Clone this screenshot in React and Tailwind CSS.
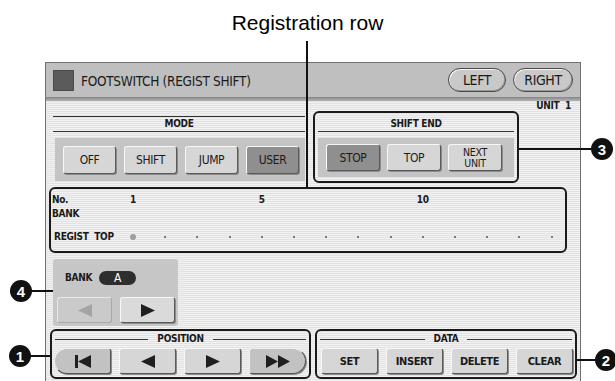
import React from "react";

function Tri({ dir = "r", color = "#1f1f1f", w = 14, h = 13 }) {
  const pts = dir === "r" ? `0,0 ${w},${h / 2} 0,${h}` : `${w},0 0,${h / 2} ${w},${h}`;
  return (
    <svg width={w} height={h} viewBox={`0 0 ${w} ${h}`}>
      <polygon points={pts} fill={color} />
    </svg>
  );
}

function Btn({ children, sel, className = "" }) {
  return (
    <div
      className={`flex items-center justify-center text-center rounded-[3px] border border-[#f7f7f7] border-r-[#5a5a5a] border-b-[#5a5a5a] shadow-[1px_1px_0_#8c8c8c] ${
        sel ? "bg-[#8f8f8f]" : "bg-[#d6d6d6]"
      } ${className}`}
    >
      {children}
    </div>
  );
}

function Pill({ children, className = "" }) {
  return (
    <div
      className={`h-[24px] flex items-center justify-center rounded-full border border-[#4a4a4a] bg-[#c9c9c9] shadow-[inset_1px_1px_0_#f4f4f4,inset_-1px_-1px_0_#9a9a9a] text-[14px] leading-[14px] tracking-[-0.4px] ${className}`}
    >
      {children}
    </div>
  );
}

function Num({ n, className }) {
  return (
    <div
      className={`absolute w-[22px] h-[22px] rounded-full bg-[#111111] text-white flex items-center justify-center text-[15px] leading-[15px] font-bold font-['Liberation_Sans',Arial,sans-serif] ${className}`}
    >
      {n}
    </div>
  );
}

function LabelRule({ label }) {
  return (
    <div className="h-[16px] flex items-center px-[3px]">
      <div className="flex-1 h-px bg-[#333333]" />
      <div className="px-[9px] text-[10px] leading-[10px] font-bold tracking-[-0.3px]">{label}</div>
      <div className="flex-1 h-px bg-[#333333]" />
    </div>
  );
}

const COLS = "grid grid-cols-[66px_repeat(14,32.2px)]";
const BTXT = "text-[12px] leading-[12px] tracking-[-0.4px]";

export default function App() {
  const dots = Array.from({ length: 14 }, (_, i) => i);
  return (
    <div className="relative w-[615px] h-[381px] overflow-hidden bg-white text-[#1a1a1a] font-['DejaVu_Sans_Condensed','Liberation_Sans',sans-serif]">
      <div className="h-[62px] pt-[10px] text-center text-[21px] leading-[25px] text-black font-['Liberation_Sans',Arial,sans-serif]">
        Registration row
      </div>

      <div className="ml-[45px] w-[536px] border border-b-0 border-[#707070]">
        {/* header */}
        <div className="h-[34px] bg-[#bfbfbf] flex items-center px-[7px]">
          <div className="w-[21px] h-[21px] bg-[#5b5b5b] border border-[#4a4a4a]" />
          <div className="ml-[7px] mt-[2px] text-[13.5px] leading-[16px] tracking-[-0.3px]">FOOTSWITCH (REGIST SHIFT)</div>
          <div className="ml-auto flex gap-[7px] -mt-[1px]">
            <Pill className="w-[58px]">LEFT</Pill>
            <Pill className="w-[60px]">RIGHT</Pill>
          </div>
        </div>
        <div className="h-[4px] bg-[image:linear-gradient(to_bottom,#858585,#b5b5b5)]" />

        {/* body */}
        <div className="h-[290px] bg-[image:repeating-linear-gradient(180deg,#e2e2e2_0px,#e2e2e2_1px,#f2f2f2_1px,#f2f2f2_2px)]">
          <div className="h-[10px] flex justify-end pr-[9px] text-[10px] leading-[10px] font-bold tracking-[-0.3px]">UNIT&nbsp;&nbsp;1</div>

          <div className="flex pl-[7px] gap-[8px]">
            {/* MODE */}
            <div className="w-[252px] mt-[5px]">
              <div className="h-px bg-[#333333]" />
              <div className="h-[14px] text-center text-[10px] leading-[14px] font-bold tracking-[-0.3px]">MODE</div>
              <div className="h-px bg-[#333333]" />
              <div className="mt-[6px] ml-[2px] h-[43px] bg-[#c4c4c4] flex items-center pl-[8px] gap-[8px]">
                <Btn className={`w-[53px] h-[28px] ${BTXT}`}>OFF</Btn>
                <Btn className={`w-[53px] h-[28px] ${BTXT}`}>SHIFT</Btn>
                <Btn className={`w-[53px] h-[28px] ${BTXT}`}>JUMP</Btn>
                <Btn sel className={`w-[53px] h-[28px] ${BTXT}`}>USER</Btn>
              </div>
            </div>

            {/* SHIFT END */}
            <div className="w-[206px] h-[72px] border-2 border-[#1a1a1a] rounded-[6px]">
              <div className="h-[18px] pt-[4px] text-center text-[10px] leading-[14px] font-bold tracking-[-0.3px]">SHIFT END</div>
              <div className="mx-[3px] h-px bg-[#333333]" />
              <div className="mt-[6px] mx-[3px] h-[39px] bg-[#c4c4c4] flex items-center pl-[8px] gap-[7px]">
                <Btn sel className={`w-[54px] h-[27px] ${BTXT}`}>STOP</Btn>
                <Btn className={`w-[54px] h-[27px] ${BTXT}`}>TOP</Btn>
                <Btn className="w-[54px] h-[27px] flex-col text-[10.5px] leading-[11px] tracking-[-0.3px]">
                  <span className="block h-[11px]">NEXT</span>
                  <span className="block h-[11px]">UNIT</span>
                </Btn>
              </div>
            </div>
          </div>

          {/* Registration row */}
          <div className="mt-[4px] ml-[3px] w-[518px] h-[66px] border-2 border-[#1a1a1a] rounded-[6px] text-[10px] font-bold tracking-[-0.3px]">
            <div className={`${COLS} mt-[4px] h-[13px] leading-[13px]`}>
              <div className="pl-[1px]">No.</div>
              {dots.map((i) => (
                <div key={i} className="text-center">
                  {i === 0 ? "1" : i === 4 ? "5" : i === 9 ? "10" : ""}
                </div>
              ))}
            </div>
            <div className="mt-[1px] h-[13px] leading-[13px] pl-[1px]">BANK</div>
            <div className={`${COLS} mt-[10px] h-[13px] leading-[13px]`}>
              <div className="pl-[3px]">REGIST&nbsp;&nbsp;TOP</div>
              {dots.map((i) => (
                <div key={i} className="flex items-center justify-center pt-[1px]">
                  {i === 0 ? (
                    <div className="w-[6px] h-[6px] rounded-full bg-[#9e9e9e]" />
                  ) : (
                    <div className="w-[2px] h-[2px] rounded-full bg-[#555555]" />
                  )}
                </div>
              ))}
            </div>
          </div>

          {/* Bank */}
          <div className="mt-[6px] ml-[7px] w-[125px] h-[67px] bg-[#c6c6c6] rounded-[3px] pt-[12px]">
            <div className="flex items-center pl-[12px] gap-[7px] h-[14px]">
              <div className="text-[10px] leading-[10px] font-bold tracking-[-0.3px]">BANK</div>
              <div className="w-[37px] h-[14px] rounded-full bg-[#2e2e2e] text-white flex items-center justify-center text-[12px] leading-[12px]">
                A
              </div>
            </div>
            <div className="mt-[12px] flex pl-[4px] gap-[8px]">
              <div className="w-[55px] h-[26px] flex items-center justify-center rounded-[3px] border border-[#e8e8e8] border-r-[#a8a8a8] border-b-[#a8a8a8] bg-[#cacaca]">
                <Tri dir="l" color="#a4a4a4" />
              </div>
              <Btn className="w-[55px] h-[26px] bg-[#dadada]">
                <Tri dir="r" />
              </Btn>
            </div>
          </div>

          {/* Position / Data */}
          <div className="mt-[3px] flex pl-[4px] gap-[4px]">
            <div className="w-[261px] h-[50px] border-2 border-[#1a1a1a] rounded-[6px]">
              <LabelRule label="POSITION" />
              <div className="mt-[1px] flex pl-[2px] gap-[8px]">
                <div className="w-[57px] h-[26px] flex items-center justify-center rounded-l-[13px] rounded-r-[3px] border border-[#efefef] border-r-[#555555] border-b-[#555555] bg-[#c2c2c2] shadow-[1px_1px_0_#8c8c8c]">
                  <div className="w-[3px] h-[13px] bg-[#1f1f1f]" />
                  <Tri dir="l" w={13} />
                </div>
                <Btn className="w-[57px] h-[26px] bg-[#c2c2c2]">
                  <Tri dir="l" />
                </Btn>
                <Btn className="w-[57px] h-[26px] bg-[#c2c2c2]">
                  <Tri dir="r" />
                </Btn>
                <div className="w-[57px] h-[26px] flex items-center justify-center rounded-r-[13px] rounded-l-[3px] border border-[#efefef] border-r-[#555555] border-b-[#555555] bg-[#c2c2c2] shadow-[1px_1px_0_#8c8c8c]">
                  <Tri dir="r" w={12} />
                  <Tri dir="r" w={12} />
                </div>
              </div>
            </div>
            <div className="w-[262px] h-[50px] border-2 border-[#1a1a1a] rounded-[6px]">
              <LabelRule label="DATA" />
              <div className="mt-[1px] flex pl-[4px] gap-[8px] text-[11px] leading-[11px] font-bold tracking-[-0.4px]">
                <Btn className="w-[57px] h-[26px] bg-[#c2c2c2]">SET</Btn>
                <Btn className="w-[57px] h-[26px] bg-[#c2c2c2]">INSERT</Btn>
                <Btn className="w-[57px] h-[26px] bg-[#c2c2c2]">DELETE</Btn>
                <Btn className="w-[57px] h-[26px] bg-[#c2c2c2]">CLEAR</Btn>
              </div>
            </div>
          </div>
        </div>
      </div>

      {/* callout lines */}
      <div className="absolute left-[306px] top-[41px] w-[2px] h-[146px] bg-[#111111]" />
      <div className="absolute left-[519px] top-[148px] w-[72px] h-[2px] bg-[#111111]" />
      <Num n="3" className="left-[591px] top-[138px]" />
      <div className="absolute left-[31px] top-[290px] w-[22px] h-[2px] bg-[#111111]" />
      <Num n="4" className="left-[10px] top-[280px]" />
      <div className="absolute left-[30px] top-[355px] w-[20px] h-[2px] bg-[#111111]" />
      <Num n="1" className="left-[9px] top-[345px]" />
      <div className="absolute left-[577px] top-[359px] w-[20px] h-[2px] bg-[#111111]" />
      <Num n="2" className="left-[595px] top-[349px]" />
    </div>
  );
}
